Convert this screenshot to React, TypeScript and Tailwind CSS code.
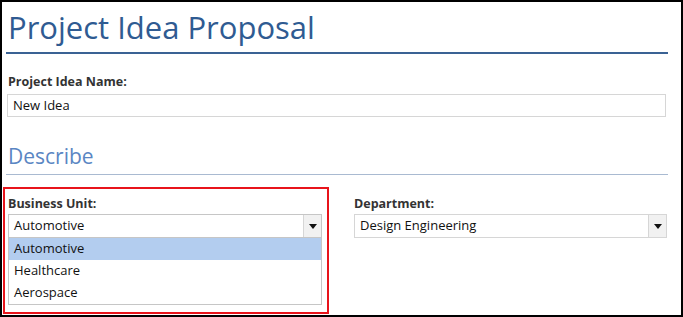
const font = { fontFamily: '"Open Sans", "Noto Sans", sans-serif' };

function Caret() {
  return (
    <svg width="8" height="5" viewBox="0 0 8 5" className="block">
      <path d="M0 0h8L4 5z" fill="#111" />
    </svg>
  );
}

function SelectBox({ value, open }: { value: string; open?: boolean }) {
  return (
    <div
      className={`flex h-[24px] items-stretch border bg-white ${
        open ? "border-[#c6c6c6]" : "border-[#d6d6d6]"
      }`}
    >
      <span className="flex flex-1 items-center pl-[5px] text-[13px] text-[#111]">
        {value}
      </span>
      <span className="flex w-[18px] items-center justify-center border-l border-[#d6d6d6] bg-[#f1f1f1]">
        <Caret />
      </span>
    </div>
  );
}

export default function App() {
  const units = ["Automotive", "Healthcare", "Aerospace"];

  return (
    <div
      className="box-border h-[317px] w-[683px] overflow-hidden border-2 border-black bg-white pl-[4px] pr-[13px]"
      style={font}
    >
      <div className="flex h-[52px] items-end border-b-2 border-[#3a6294] pb-[4px] pl-[2px]">
        <h1 className="text-[31px] leading-[42px] text-[#2f5b92]">
          Project Idea Proposal
        </h1>
      </div>

      <div className="mt-[19px] pl-[2px] text-[12.5px] font-bold leading-[18px] text-[#333]">
        Project Idea Name:
      </div>
      <div className="mt-[3px] ml-[1px] flex h-[23px] w-[659px] items-center border border-[#d6d6d6] pl-[5px] text-[13px] text-[#111]">
        New Idea
      </div>

      <div className="mt-[25px] border-b border-[#a9bad1] pb-[4px] pl-[2px]">
        <h2 className="text-[21px] leading-[28px] text-[#5a86c3]">Describe</h2>
      </div>

      <div className="mt-[12px] flex">
        <div className="ml-[-3px] box-border w-[326px] border-2 border-[#e8141b] pb-[7px] pl-[3px] pr-[5px] pt-[6px]">
          <div className="text-[12.5px] font-bold leading-[18px] text-[#333]">
            Business Unit:
          </div>
          <div className="mt-[1px]">
            <SelectBox value="Automotive" open />
            <div className="border border-t-0 border-[#c6c6c6] bg-white">
              {units.map((u, i) => (
                <div
                  key={u}
                  className={`flex h-[22px] items-center pl-[5px] text-[13px] text-[#111] ${
                    i === 0 ? "bg-[#b3cdef]" : ""
                  }`}
                >
                  {u}
                </div>
              ))}
            </div>
          </div>
        </div>

        <div className="ml-[25px] w-[313px] pt-[8px]">
          <div className="text-[12.5px] font-bold leading-[18px] text-[#333]">
            Department:
          </div>
          <div className="mt-[1px]">
            <SelectBox value="Design Engineering" />
          </div>
        </div>
      </div>
    </div>
  );
}
